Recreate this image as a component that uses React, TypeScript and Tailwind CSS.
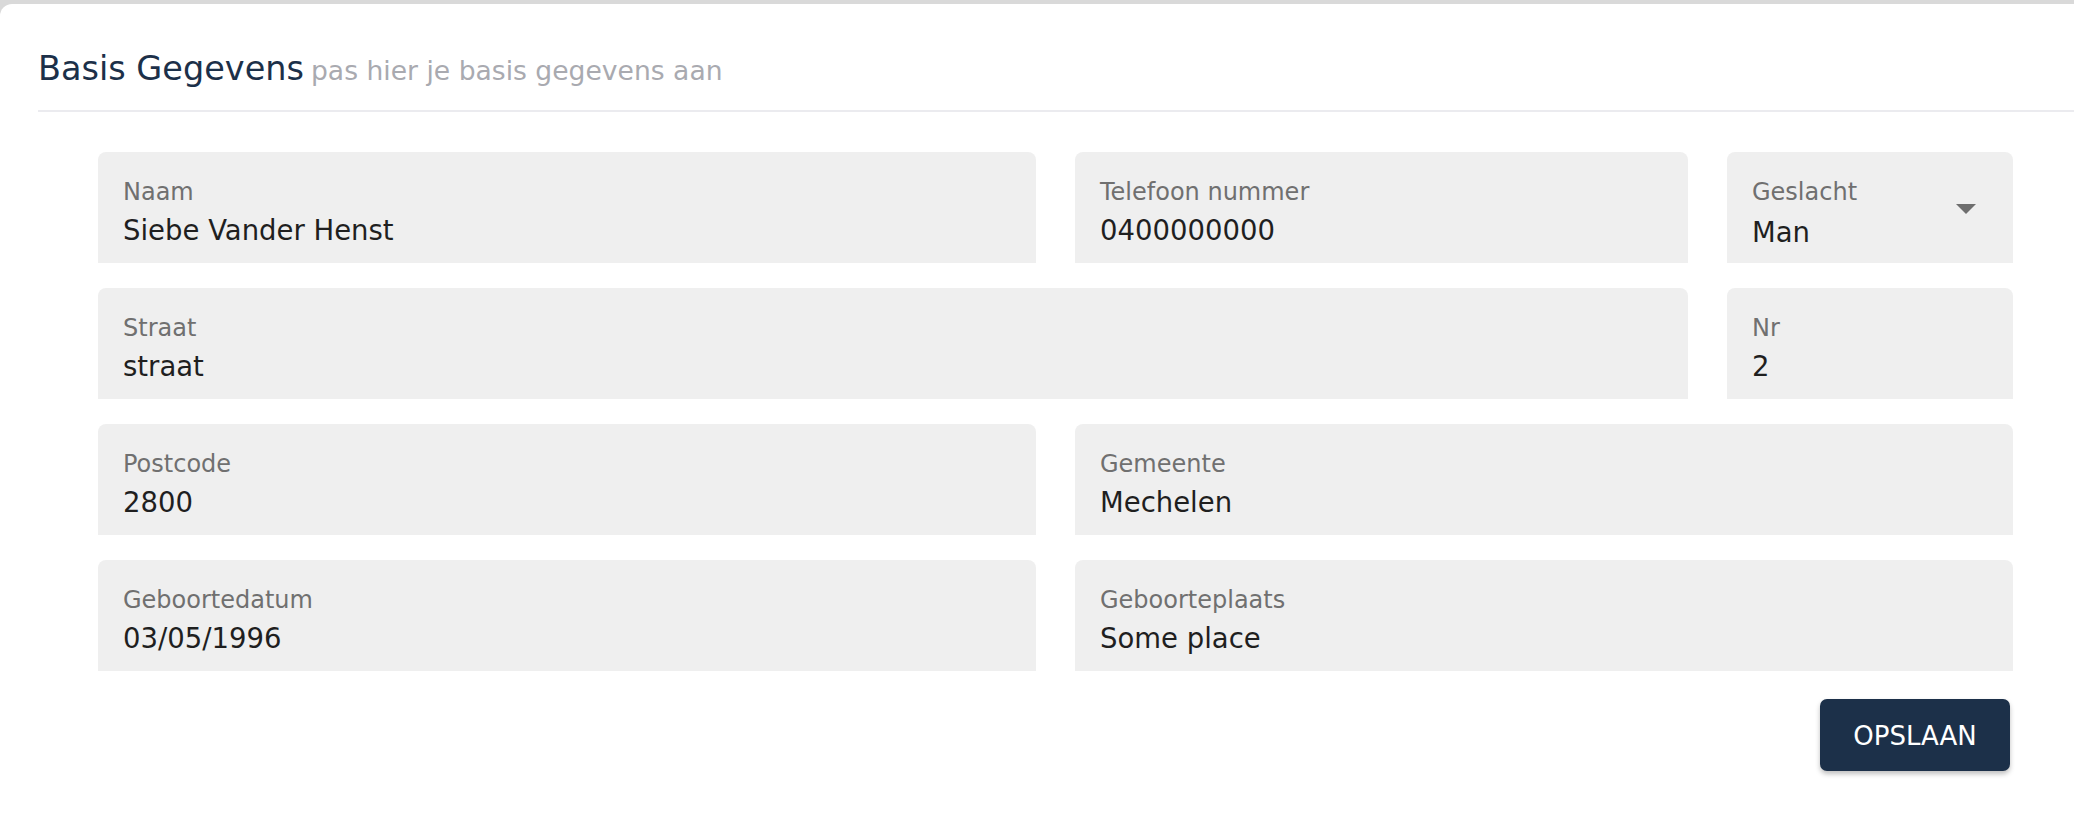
import React from 'react';

interface FieldProps {
  label: string;
  value: string;
  select?: boolean;
  className?: string;
}

const Field: React.FC<FieldProps> = ({ label, value, select, className = '' }) => (
  <div className={`relative h-[111px] rounded-t-[8px] bg-[#efefef] pl-[25px] pt-[28px] ${className}`}>
    <div className="text-[24px] leading-none text-[#707070]">{label}</div>
    <div className={`${select ? 'mt-[15px]' : 'mt-[13px]'} text-[27.5px] leading-none text-[#1f1f1f]`}>{value}</div>
    {select && (
      <svg className="absolute right-[37px] top-[52px] h-[10px] w-[20px]" viewBox="0 0 20 10">
        <path d="M0 0 L20 0 L10 10 Z" fill="#6e6e6e" />
      </svg>
    )}
  </div>
);

export default function App() {
  return (
    <div className="min-h-screen bg-[#d9d9d9] pt-1 font-['DejaVu_Sans',sans-serif]">
      <div className="flex h-[828px] flex-col rounded-tl-xl bg-white">
        <div className="flex items-baseline gap-[7px] pl-[38px] pt-[48px]">
          <h2 className="text-[33.5px] leading-none text-[#1c3049]">Basis Gegevens</h2>
          <span className="text-[26.6px] leading-none text-[#a9aab0]">pas hier je basis gegevens aan</span>
        </div>
        <div className="ml-[38px] mt-[24px] h-[2px] bg-[#ebebef]" />

        <form className="flex flex-col pl-[98px] pr-[61px] pt-[40px]">
          <div className="grid grid-cols-[938fr_613fr_286fr] gap-x-[39px] gap-y-[25px]">
            <Field label="Naam" value="Siebe Vander Henst" />
            <Field label="Telefoon nummer" value="0400000000" />
            <Field label="Geslacht" value="Man" select />

            <Field label="Straat" value="straat" className="col-span-2" />
            <Field label="Nr" value="2" />

            <Field label="Postcode" value="2800" />
            <Field label="Gemeente" value="Mechelen" className="col-span-2" />

            <Field label="Geboortedatum" value="03/05/1996" />
            <Field label="Geboorteplaats" value="Some place" className="col-span-2" />
          </div>

          <button
            type="button"
            className="mr-[3px] mt-[28px] h-[72px] w-[190px] self-end rounded-[7px] bg-[#1c3049] pt-[3px] text-[26px] text-white shadow-[0_3px_5px_rgba(0,0,0,0.25)]"
          >
            OPSLAAN
          </button>
        </form>
      </div>
    </div>
  );
}
